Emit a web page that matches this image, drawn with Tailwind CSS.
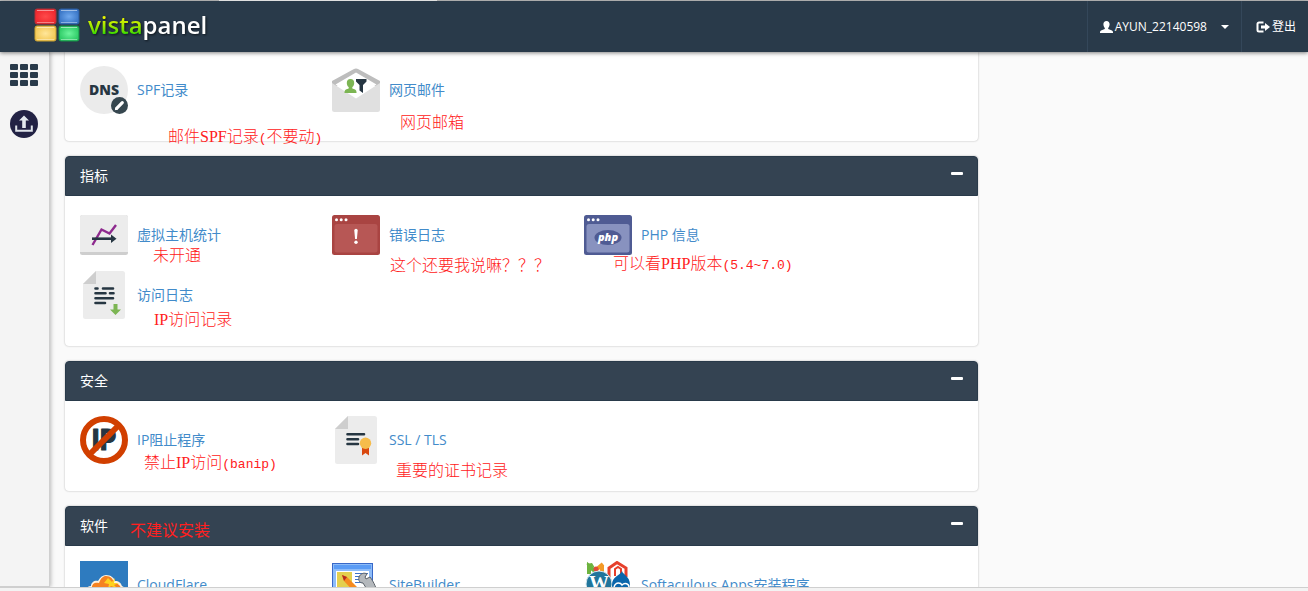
<!DOCTYPE html>
<html lang="zh-CN">
<head>
    <meta charset="UTF-8">
    <meta name="viewport" content="width=device-width, initial-scale=1.0">
    <title>vistapanel</title>
    <script src="https://cdn.jsdelivr.net/npm/@tailwindcss/browser@4"></script>
</head>
<body class="h-screen flex flex-col overflow-hidden bg-[#fafafa] font-['Open_Sans','Noto_Sans_CJK_SC',sans-serif] text-sm">
    <!-- 标签栏底边 -->
    <div class="flex h-px shrink-0 bg-[#c3c3c3]">
        <div class="ml-[219px] w-[218px] bg-white"></div>
    </div>

    <!-- 顶部导航 -->
    <header class="relative z-10 flex h-[51px] shrink-0 items-stretch justify-between bg-[#293a4a] text-xs text-white shadow-[0_1px_4px_rgba(0,0,0,0.5)]">
        <a href="#" class="flex items-center gap-2 pb-1 pl-[34px]">
            <svg class="h-[34px] w-[46px]" viewBox="0 0 46 34">
                <defs>
                    <radialGradient id="r"><stop offset="0" stop-color="#ff4a4a"/><stop offset="1" stop-color="#f02a30"/></radialGradient>
                    <radialGradient id="b"><stop offset="0" stop-color="#6fa8ee"/><stop offset="1" stop-color="#3c78c8"/></radialGradient>
                    <radialGradient id="y"><stop offset="0" stop-color="#ffe69a"/><stop offset="1" stop-color="#f4ca58"/></radialGradient>
                    <radialGradient id="g"><stop offset="0" stop-color="#6cf49c"/><stop offset="1" stop-color="#30cc68"/></radialGradient>
                </defs>
                <rect x="1" y="1" width="21" height="15" rx="2" fill="url(#r)" stroke="#b03038"/>
                <rect x="25" y="1" width="20" height="15" rx="2" fill="url(#b)" stroke="#2c5ca0"/>
                <rect x="1" y="18" width="21" height="15" rx="2" fill="url(#y)" stroke="#c8a030"/>
                <rect x="25" y="18" width="20" height="15" rx="2" fill="url(#g)" stroke="#189048"/>
                <path d="M3 2.500h17M27 2.500h16M3 19.500h17M27 19.500h16" stroke="#fff" stroke-opacity=".5"/>
                <path d="M3 14.500h17M27 14.500h16M3 31.500h17M27 31.500h16" stroke="#fff" stroke-opacity=".4"/>
            </svg>
            <span class="text-2xl leading-8 font-semibold text-white drop-shadow-[1px_1px_1px_rgba(0,0,0,0.6)]"><span class="bg-linear-to-b from-[#e8f500] from-30% to-[#1fd800] to-80% bg-clip-text text-transparent">vista</span>panel</span>
        </a>
        <nav class="flex">
            <button class="flex items-center border-l border-[#34475a] pr-3 pl-3">
                <svg class="mr-0.5 h-3 w-[13px]" viewBox="0 0 13 12" fill="#fff"><path d="M6.500 0C8.500 0 9.600 1.300 9.600 3.200c0 1.500-.6 2.900-1.400 3.700v1l3.800 1.700c.6.300 1 .9 1 1.500V12H0v-.9c0-.6.4-1.200 1-1.500l3.800-1.700v-1C4 6.100 3.400 4.700 3.400 3.200 3.400 1.300 4.500 0 6.500 0z"/></svg>
                <span>AYUN_22140598</span>
                <svg class="ml-3.5 h-1 w-2" viewBox="0 0 8 4" fill="#fff"><path d="M0 0h8L4 4z"/></svg>
            </button>
            <a href="#" class="flex items-center border-l border-[#34475a] pr-3 pl-3.5">
                <svg class="mr-0.5 h-3 w-[14px]" viewBox="0 0 14 12"><path d="M7.500 1.500H3A1.500 1.500 0 0 0 1.500 3v6A1.500 1.500 0 0 0 3 10.500h4.500" fill="none" stroke="#fff" stroke-width="2"/><path d="M5 4.500h4V2l5 4-5 4V7.500H5z" fill="#fff"/></svg>
                登出
            </a>
        </nav>
    </header>

    <div class="flex min-h-0 flex-1">
        <!-- 侧边栏 -->
        <aside class="flex w-[50px] shrink-0 flex-col items-center gap-6 border-r border-b border-[#cfcfcf] bg-[#f4f4f4] pt-3 pr-0.5 shadow-[1px_0_4px_rgba(0,0,0,0.25)]">
            <a href="#" aria-label="主页">
                <svg class="h-[22px] w-7" viewBox="0 0 28 22" fill="#293a4a">
                    <rect width="8" height="6" rx="1"/><rect x="10" width="8" height="6" rx="1"/><rect x="20" width="8" height="6" rx="1"/>
                    <rect y="8" width="8" height="6" rx="1"/><rect x="10" y="8" width="8" height="6" rx="1"/><rect x="20" y="8" width="8" height="6" rx="1"/>
                    <rect y="16" width="8" height="6" rx="1"/><rect x="10" y="16" width="8" height="6" rx="1"/><rect x="20" y="16" width="8" height="6" rx="1"/>
                </svg>
            </a>
            <a href="#" aria-label="上传">
                <svg class="size-7" viewBox="0 0 28 28">
                    <circle cx="14" cy="14" r="14" fill="#222244"/>
                    <path d="M14 5.500l5 5h-3.200V18h-3.600v-7.500H9z" fill="#e4e9ee"/>
                    <path d="M6.200 15.500v5.300h15.600v-5.300" fill="none" stroke="#dfe4ea" stroke-width="2"/>
                </svg>
            </a>
        </aside>

        <!-- 主要内容 -->
        <main class="min-w-0 flex-1 overflow-hidden pr-4 pl-[15px]">
            <div class="flex max-w-[913px] flex-col gap-[15px]">
                <!-- 邮件 -->
                <section class="rounded-b bg-white shadow-[0_0_2px_rgba(0,0,0,0.3)]">
                    <ul class="flex flex-wrap px-[15px] pt-2 pb-[21px]">
                        <li class="relative flex h-[60px] w-[252px] items-center gap-[9px]">
                            <svg class="size-12" viewBox="0 0 48 48">
                                <circle cx="24" cy="24" r="24" fill="#ebebeb"/>
                                <text x="24" y="29" text-anchor="middle" font-family="Open Sans, sans-serif" font-size="14" font-weight="800" fill="#263642">DNS</text>
                                <circle cx="39.500" cy="39.500" r="8.500" fill="#36474f"/>
                                <path d="M36.700 42.300l5.600-5.600" stroke="#fff" stroke-width="3.200" stroke-linecap="round"/><path d="M34.800 44.300l.8-3 2.200 2.200z" fill="#fff"/>
                            </svg>
                            <a href="#" class="text-[#428bca]">SPF记录</a>
                            <span class="absolute top-[68px] left-[88px] text-base leading-4 font-light whitespace-nowrap text-[#ff2020]">邮件<span class="font-['Liberation_Serif',serif]">SPF</span>记录<span class="font-['Liberation_Mono',monospace] text-[13px]">(</span>不要动<span class="font-['Liberation_Mono',monospace] text-[13px]">)</span></span>
                        </li>
                        <li class="relative flex h-[60px] w-[252px] items-center gap-[9px]">
                            <svg class="size-12" viewBox="0 0 48 48">
                                <path d="M0 15L21.500 3.200a5 5 0 0 1 5 0L48 15v5H0z" fill="#bdbdbd"/>
                                <path d="M3.500 18.500L24 6.500l20.500 12L24 33z" fill="#fff"/>
                                <path d="M0 17l24 15.500L48 17v26.500a2.500 2.500 0 0 1-2.500 2.500h-43A2.500 2.500 0 0 1 0 43.500z" fill="#e0e0e0"/>
                                <path d="M18.500 13c2.400 0 3.700 1.700 3.700 3.900 0 1.700-.8 3.300-1.900 4.200v1.400c1.900.6 4.200 1.200 4.200 3.500v1h-12v-1c0-2.300 2.300-2.900 4.200-3.500v-1.400c-1.100-.9-1.900-2.500-1.900-4.200 0-2.200 1.300-3.900 3.700-3.900z" fill="#7cb553"/>
                                <path d="M24 13h10.500v2.500L31 19v8l-3.500-2.500V19L24 15.500z" fill="#263642"/>
                            </svg>
                            <a href="#" class="text-[#428bca]">网页邮件</a>
                            <span class="absolute top-[54px] left-[68px] text-base leading-4 font-light whitespace-nowrap text-[#ff2020]">网页邮箱</span>
                        </li>
                    </ul>
                </section>

                <!-- 指标 -->
                <section class="rounded bg-white shadow-[0_0_2px_rgba(0,0,0,0.3)]">
                    <h2 class="relative flex h-10 items-center justify-between rounded-t border border-[#293a4a] bg-[#344352] px-3.5 text-white">
                        指标
                        <button aria-label="收起" class="pb-1.5"><svg class="h-[3px] w-3" viewBox="0 0 12 3"><rect width="12" height="3" rx="1" fill="#fff"/></svg></button>
                    </h2>
                    <ul class="flex flex-wrap px-[15px] pt-[9px] pb-[21px]">
                        <li class="relative flex h-[60px] w-[252px] items-center gap-[9px]">
                            <svg class="h-10 w-12" viewBox="0 0 48 40">
                                <rect width="48" height="40" rx="2.500" fill="#cecece"/>
                                <path d="M2.500 0h43A2.500 2.500 0 0 1 48 2.500V37H0V2.500A2.500 2.500 0 0 1 2.500 0z" fill="#ececec"/>
                                <path d="M12.500 30L21.500 14.500l8 4L36 10" fill="none" stroke="#8e2a8e" stroke-width="2.400"/>
                                <path d="M12 23.700h21" stroke="#263642" stroke-width="2.600"/><path d="M31 19.500l5.500 4.200L31 28z" fill="#263642"/>
                            </svg>
                            <a href="#" class="text-[#428bca]">虚拟主机统计</a>
                            <span class="absolute top-[42px] left-[73px] text-base leading-4 font-light whitespace-nowrap text-[#ff2020]">未开通</span>
                        </li>
                        <li class="relative flex h-[60px] w-[252px] items-center gap-[9px]">
                            <svg class="h-10 w-12" viewBox="0 0 48 40">
                                <rect width="48" height="40" rx="2.500" fill="#a94442"/>
                                <rect x="2.500" y="9" width="43" height="28.500" rx="2.500" fill="#b75755"/>
                                <circle cx="4.500" cy="4.800" r="1.500" fill="#fff"/><circle cx="9.200" cy="4.800" r="1.500" fill="#fff"/><circle cx="14" cy="4.800" r="1.500" fill="#fff"/>
                                <path d="M22.300 15.500a1.700 1.700 0 0 1 3.400 0l-.8 8.500h-1.800z" fill="#fff"/><circle cx="24" cy="27.200" r="1.700" fill="#fff"/>
                            </svg>
                            <a href="#" class="text-[#428bca]">错误日志</a>
                            <span class="absolute top-[52px] left-[58px] text-base leading-4 font-light whitespace-nowrap text-[#ff2020]">这个还要我说嘛？？？</span>
                        </li>
                        <li class="relative flex h-[60px] w-[252px] items-center gap-[9px]">
                            <svg class="h-10 w-12" viewBox="0 0 48 40">
                                <rect width="48" height="40" rx="2.500" fill="#4f5b93"/>
                                <rect x="2.500" y="9" width="43" height="28.500" rx="2.500" fill="#8892bf"/>
                                <circle cx="4.500" cy="4.800" r="1.500" fill="#fff"/><circle cx="9.200" cy="4.800" r="1.500" fill="#fff"/><circle cx="14" cy="4.800" r="1.500" fill="#fff"/>
                                <ellipse cx="24" cy="22.500" rx="13.500" ry="7.500" fill="#4f5b93"/>
                                <text x="24" y="26" text-anchor="middle" font-family="Open Sans, sans-serif" font-size="11" font-weight="800" font-style="italic" fill="#fff">php</text>
                            </svg>
                            <a href="#" class="text-[#428bca]">PHP 信息</a>
                            <span class="absolute top-[50px] left-[29px] text-base leading-4 font-light whitespace-nowrap text-[#ff2020]">可以看<span class="font-['Liberation_Serif',serif]">PHP</span>版本<span class="font-['Liberation_Mono',monospace] text-[13px]">(5.4~7.0)</span></span>
                        </li>
                        <li class="relative flex h-[60px] w-[252px] items-center gap-[9px]">
                            <svg class="size-12" viewBox="0 0 48 48">
                                <path d="M16 0h26.500A2.500 2.500 0 0 1 45 2.500v43a2.500 2.500 0 0 1-2.500 2.500h-37A2.500 2.500 0 0 1 3 45.500V13z" fill="#ececec"/>
                                <path d="M16 0v13H3z" fill="#cecece"/>
                                <path d="M15.500 17.500h2M23 17.500h10M15.500 22.300h10M30 22.300h3.500M15.500 27.200h17.500M15.500 32h9.500" stroke="#263642" stroke-width="2.600" stroke-linecap="round"/>
                                <path d="M33.500 33h4v5.500H41L35.500 44 30 38.500h3.500z" fill="#7cb553"/>
                            </svg>
                            <a href="#" class="text-[#428bca]">访问日志</a>
                            <span class="absolute top-[46px] left-[74px] text-base leading-4 font-light whitespace-nowrap text-[#ff2020]"><span class="font-['Liberation_Serif',serif]">IP</span>访问记录</span>
                        </li>
                    </ul>
                </section>

                <!-- 安全 -->
                <section class="rounded bg-white shadow-[0_0_2px_rgba(0,0,0,0.3)]">
                    <h2 class="relative flex h-10 items-center justify-between rounded-t border border-[#293a4a] bg-[#344352] px-3.5 text-white">
                        安全
                        <button aria-label="收起" class="pb-1.5"><svg class="h-[3px] w-3" viewBox="0 0 12 3"><rect width="12" height="3" rx="1" fill="#fff"/></svg></button>
                    </h2>
                    <ul class="flex flex-wrap px-[15px] pt-[9px] pb-[21px]">
                        <li class="relative flex h-[60px] w-[252px] items-center gap-[9px]">
                            <svg class="size-12" viewBox="0 0 48 48">
                                <text x="11 19" y="34" font-family="Open Sans, sans-serif" font-size="28" font-weight="700" fill="#263642" stroke="#263642" stroke-linejoin="round">IP</text>
                                <path d="M10 38L38 10" stroke="#d13f00" stroke-width="6"/>
                                <circle cx="24" cy="24" r="21" fill="none" stroke="#d13f00" stroke-width="6"/>
                            </svg>
                            <a href="#" class="text-[#428bca]">IP阻止程序</a>
                            <span class="absolute top-[44px] left-[64px] text-base leading-4 font-light whitespace-nowrap text-[#ff2020]">禁止<span class="font-['Liberation_Serif',serif]">IP</span>访问<span class="font-['Liberation_Mono',monospace] text-[13px]">(banip)</span></span>
                        </li>
                        <li class="relative flex h-[60px] w-[252px] items-center gap-[9px]">
                            <svg class="size-12" viewBox="0 0 48 48">
                                <path d="M16 0h26.500A2.500 2.500 0 0 1 45 2.500v43a2.500 2.500 0 0 1-2.500 2.500h-37A2.500 2.500 0 0 1 3 45.500V13z" fill="#ececec"/>
                                <path d="M16 0v13H3z" fill="#cecece"/>
                                <path d="M15.500 18.300H32M15.500 23.200H26M15.500 28H26" stroke="#263642" stroke-width="2.600" stroke-linecap="round"/>
                                <path d="M30 31h7v8.500L33.500 37 30 39.500z" fill="#d9480f"/>
                                <circle cx="33.500" cy="27.300" r="5.700" fill="#f6bc4b"/>
                            </svg>
                            <a href="#" class="text-[#428bca]">SSL / TLS</a>
                            <span class="absolute top-[52px] left-[64px] text-base leading-4 font-light whitespace-nowrap text-[#ff2020]">重要的证书记录</span>
                        </li>
                    </ul>
                </section>

                <!-- 软件 -->
                <section class="rounded bg-white shadow-[0_0_2px_rgba(0,0,0,0.3)]">
                    <h2 class="relative flex h-10 items-center justify-between rounded-t border border-[#293a4a] bg-[#344352] px-3.5 text-white">
                        软件
                        <span class="absolute top-[15px] left-16 text-base leading-4 whitespace-nowrap text-[#ff2020]">不建议安装</span>
                        <button aria-label="收起" class="pb-1.5"><svg class="h-[3px] w-3" viewBox="0 0 12 3"><rect width="12" height="3" rx="1" fill="#fff"/></svg></button>
                    </h2>
                    <ul class="flex flex-wrap px-[15px] pt-[9px] pb-[21px]">
                        <li class="flex h-[60px] w-[252px] items-center gap-[9px]">
                            <svg class="size-12" viewBox="0 0 48 48">
                                <rect width="48" height="48" fill="#2e7bbf"/>
                                <path d="M5 34c0-6 2-9 6-9 0-4 4-6 7-5 2-4 5-6 8-6 5 0 8 3 9 6 4 0 6 2 7 5 3 1 4 4 4 9z" fill="#fff3e0"/>
                                <path d="M6 34c0-5 2-8 6-8 0-4 4-5 7-4 2-5 4-7 7-7 5 0 7 3 8 7 5 0 8 4 9 12z" fill="#f58220"/>
                                <path d="M28 17l4 4 3-4-1 5 5 0-5 2 3 3-6-2-3 3 1-5-5-1z" fill="#ffd21e"/>
                            </svg>
                            <a href="#" class="text-[#428bca]">CloudFlare</a>
                        </li>
                        <li class="flex h-[60px] w-[252px] items-center gap-[9px]">
                            <svg class="size-12" viewBox="0 0 48 48">
                                <rect x=".5" y="2.500" width="40" height="40" fill="#8ebcf8" stroke="#3868c8"/>
                                <rect x="2" y="4" width="37" height="4" fill="#5b9cf5"/><rect x="4" y="10" width="33" height="29" fill="#fff"/>
                                <rect x="5" y="11" width="15" height="20" fill="#e3cf4e"/><path d="M23 12.500h13M23 15.500h11M23 18.500h9M23 21.500h8" stroke="#3f73c8"/>
                                <path d="M10 14l5 2 13 13-4 4-12-13z" fill="#f58a1f"/><path d="M10 14l5 2-3 4z" fill="#b52a1e"/>
                                <path d="M27 16c1-3 5-5 8-3l-2 3 1 2 4-2c2 3 4 5 7 14h-9L31 22c-3 0-5-2-4-6z" fill="#b4b8bc" stroke="#5c6268"/>
                            </svg>
                            <a href="#" class="text-[#428bca]">SiteBuilder</a>
                        </li>
                        <li class="flex h-[60px] w-[252px] items-center gap-[9px]">
                            <svg class="size-12" viewBox="0 0 48 48">
                                <path d="M5 13V5l7 6" fill="none" stroke="#6db33f" stroke-width="4"/><path d="M2 3l6-1 3 5z" fill="#6db33f"/>
                                <path d="M18 11V4M13 8l6-5" stroke="#f39a27" stroke-width="4"/><circle cx="12" cy="8" r="2.500" fill="#e04a3a"/>
                                <path d="M25 16V7l8-5.500L42 7v9" fill="none" stroke="#e6402c" stroke-width="3"/><path d="M31 15V8l3-2 3 2v7" fill="none" stroke="#e6402c" stroke-width="2"/>
                                <circle cx="15" cy="23" r="13" fill="#21759b" stroke="#d7e7ee"/>
                                <text x="15" y="29" text-anchor="middle" font-family="Liberation Serif, serif" font-size="20" font-weight="700" fill="#fff">W</text>
                                <path d="M38 10c1 4 8 5 8 14 0 5-4 9-9 9s-9-4-9-9c0-9 8-9 10-14z" fill="#0a66ab"/><path d="M30 26c2-6 7-4 8-2 3-3 7-1 7 2" fill="none" stroke="#fff" stroke-width="1.500"/>
                            </svg>
                            <a href="#" class="whitespace-nowrap text-[#428bca]">Softaculous Apps安装程序</a>
                        </li>
                    </ul>
                </section>
            </div>
        </main>
    </div>

    <!-- 状态栏 -->
    <footer class="h-1 shrink-0 border-t border-[#cfcfcf] bg-[#f3f3f3]"></footer>
</body>
</html>
